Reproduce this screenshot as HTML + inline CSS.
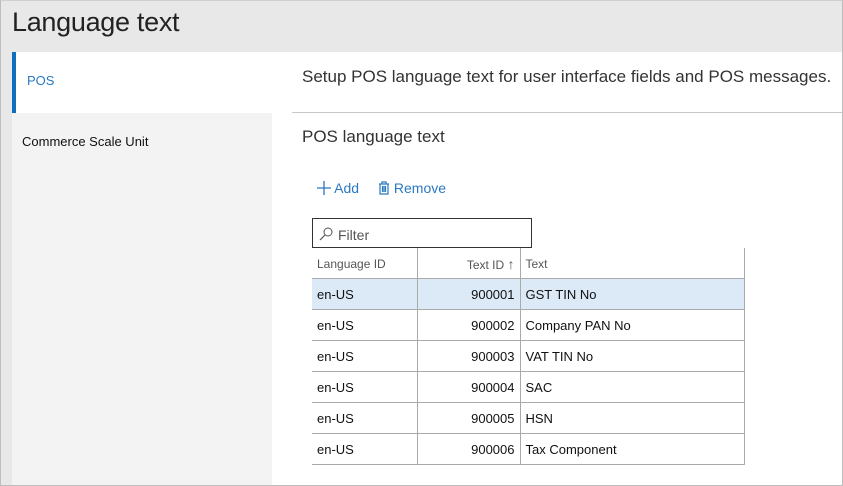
<!DOCTYPE html>
<html><head><style>
*{margin:0;padding:0;box-sizing:border-box}
body{width:843px;height:486px;overflow:hidden;font-family:"Segoe UI","Liberation Sans",sans-serif;background:#e8e8e8;position:relative}
.frame{position:absolute;left:0;top:0;width:843px;height:486px;border:1px solid #bdbdbd;border-top-color:#d0d0d0}
.title{position:absolute;left:12px;top:7px;font-size:27px;color:#222;font-weight:300;letter-spacing:-0.3px}
.nav{position:absolute;left:12px;top:52px;width:260px;height:433px;background:#f3f3f3}
.pos{position:absolute;left:12px;top:52px;width:260px;height:61px;background:#fff;border-left:4px solid #106ebe}
.pos span{position:absolute;left:11px;top:21px;font-size:13px;color:#2b79c2}
.csu{position:absolute;left:22px;top:134px;font-size:13px;color:#111}
.main{position:absolute;left:272px;top:52px;width:570px;height:433px;background:#fff}
.desc{position:absolute;left:302px;top:67px;font-size:17px;color:#333}
.hr{position:absolute;left:292px;top:112px;width:550px;height:1px;background:#c8c8c8}
.sec{position:absolute;left:302px;top:127px;font-size:17px;color:#333}
.act{position:absolute;top:180px;font-size:14px;color:#2b79c2}
.filter{position:absolute;left:312px;top:218px;width:220px;height:30px;border:1px solid #333;background:#fff}
.filter span{position:absolute;left:25px;top:8px;font-size:14px;color:#555}
table{position:absolute;left:312px;top:248px;border-collapse:collapse;font-size:13px}
td,th{height:31px;padding:2px 5px 0;color:#111;font-weight:normal;border-bottom:1px solid #aaa;border-right:1px solid #aaa}
th{height:30px;font-size:12px;color:#555;text-align:left}
td:first-child,th:first-child{width:105px}
td:nth-child(2),th:nth-child(2){width:103px;text-align:right;border-left:1px solid #aaa}
td:nth-child(3),th:nth-child(3){width:224px}
tr.sel td{background:#dce9f7}
</style></head><body>
<div class="title">Language text</div>
<div class="nav"></div>
<div class="pos"><span>POS</span></div>
<div class="csu">Commerce Scale Unit</div>
<div class="main"></div>
<div class="desc">Setup POS language text for user interface fields and POS messages.</div>
<div class="hr"></div>
<div class="sec">POS language text</div>
<div class="act" style="left:317px"><svg width="14" height="14" style="vertical-align:-2px"><path d="M7 0V14M0 7H14" stroke="#2b79c2" stroke-width="1.3"/></svg> Add</div>
<div class="act" style="left:378px"><svg width="12" height="14" style="vertical-align:-2px"><path d="M1 3H11M4 3V1H8V3M2 3V13H10V3M4.5 5V11M6 5V11M7.5 5V11" stroke="#2b79c2" fill="none" stroke-width="1.2"/></svg> Remove</div>
<div class="filter"><svg width="14" height="14" style="position:absolute;left:6px;top:8px"><circle cx="9" cy="5" r="4" stroke="#555" fill="none"/><path d="M6 8L1 13" stroke="#555" stroke-width="1.2"/></svg><span>Filter</span></div>
<table>
<tr><th>Language ID</th><th>Text ID <span style="font-size:14px">↑</span></th><th>Text</th></tr>
<tr class="sel"><td>en-US</td><td>900001</td><td>GST TIN No</td></tr>
<tr><td>en-US</td><td>900002</td><td>Company PAN No</td></tr>
<tr><td>en-US</td><td>900003</td><td>VAT TIN No</td></tr>
<tr><td>en-US</td><td>900004</td><td>SAC</td></tr>
<tr><td>en-US</td><td>900005</td><td>HSN</td></tr>
<tr><td>en-US</td><td>900006</td><td>Tax Component</td></tr>
</table>
<div class="frame"></div>
</body></html>
